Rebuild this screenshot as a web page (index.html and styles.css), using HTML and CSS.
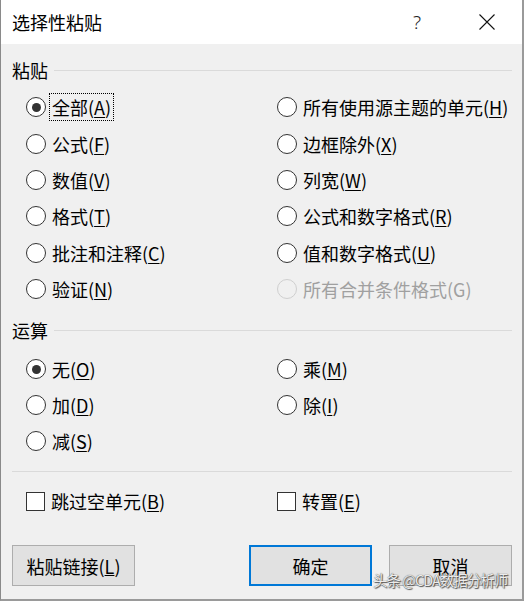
FILE: index.html
```html
<!DOCTYPE html>
<html lang="zh-CN">
<head>
<meta charset="utf-8">
<link rel="stylesheet" href="styles.css">
<title>选择性粘贴</title>
</head>
<body>
<div class="window">
  <div class="titlebar">
    <span class="title">选择性粘贴</span>
    <span class="cap help">?</span>
    <span class="cap close"><svg width="16" height="16" viewBox="0 0 16 16"><path d="M0.5 0.5 L15.5 15.5 M15.5 0.5 L0.5 15.5" stroke="#111" stroke-width="1.1" fill="none"/></svg></span>
  </div>
  <div class="content">
    <div class="group-head"><span>粘贴</span><i class="rule"></i></div>
    <div class="grid paste">
      <label class="opt"><span class="radio on"></span><span class="txt focus">全部(<u>A</u>)</span></label>
      <label class="opt"><span class="radio"></span><span class="txt">所有使用源主题的单元(<u>H</u>)</span></label>
      <label class="opt"><span class="radio"></span><span class="txt">公式(<u>F</u>)</span></label>
      <label class="opt"><span class="radio"></span><span class="txt">边框除外(<u>X</u>)</span></label>
      <label class="opt"><span class="radio"></span><span class="txt">数值(<u>V</u>)</span></label>
      <label class="opt"><span class="radio"></span><span class="txt">列宽(<u>W</u>)</span></label>
      <label class="opt"><span class="radio"></span><span class="txt">格式(<u>T</u>)</span></label>
      <label class="opt"><span class="radio"></span><span class="txt">公式和数字格式(<u>R</u>)</span></label>
      <label class="opt"><span class="radio"></span><span class="txt">批注和注释(<u>C</u>)</span></label>
      <label class="opt"><span class="radio"></span><span class="txt">值和数字格式(<u>U</u>)</span></label>
      <label class="opt"><span class="radio"></span><span class="txt">验证(<u>N</u>)</span></label>
      <label class="opt disabled"><span class="radio"></span><span class="txt">所有合并条件格式(G)</span></label>
    </div>
    <div class="group-head ops-head"><span>运算</span><i class="rule"></i></div>
    <div class="grid ops">
      <label class="opt"><span class="radio on"></span><span class="txt">无(<u>O</u>)</span></label>
      <label class="opt"><span class="radio"></span><span class="txt">乘(<u>M</u>)</span></label>
      <label class="opt"><span class="radio"></span><span class="txt">加(<u>D</u>)</span></label>
      <label class="opt"><span class="radio"></span><span class="txt">除(<u>I</u>)</span></label>
      <label class="opt"><span class="radio"></span><span class="txt">减(<u>S</u>)</span></label>
    </div>
    <i class="rule sep"></i>
    <div class="grid checks">
      <label class="opt"><span class="check"></span><span class="txt">跳过空单元(<u>B</u>)</span></label>
      <label class="opt"><span class="check"></span><span class="txt">转置(<u>E</u>)</span></label>
    </div>
    <div class="buttons">
      <button class="btn">粘贴链接(<u>L</u>)</button>
      <span class="spacer"></span>
      <button class="btn default">确定</button>
      <button class="btn">取消</button>
    </div>
  </div>
  <div class="watermark">头条 @CDA数据分析师</div>
</div>
</body>
</html>
```
FILE: styles.css
```css
html, body {
  margin: 0;
  padding: 0;
  background: #f0f0f0;
}
body {
  font-family: "Noto Sans CJK SC", "Microsoft YaHei", sans-serif;
  font-size: 18px;
  color: #000;
}
.window {
  position: relative;
  width: 524px;
  height: 601px;
  box-sizing: border-box;
  border-left: 1px solid #8a8a8a;
  border-right: 2px solid #9a9a9a;
  border-bottom: 2px solid #9a9a9a;
  background: #f0f0f0;
  overflow: hidden;
}
.titlebar {
  height: 44px;
  background: #fff;
  display: flex;
  align-items: center;
  padding-left: 11px;
}
.title {
  flex: 1;
  line-height: 24px;
}
.cap {
  width: 30px;
  display: flex;
  justify-content: center;
  align-items: center;
}
.help {
  font-family: "Noto Sans", sans-serif;
  font-weight: 300;
  font-size: 19px;
  color: #222;
  margin-right: 40px;
}
.close {
  margin-right: 20px;
}
.content {
  padding: 14px 10px 0 11px;
}
.group-head {
  display: flex;
  align-items: center;
  height: 24px;
  line-height: 24px;
}
.rule {
  display: block;
  flex: 1;
  height: 1px;
  background: #dadada;
  margin-left: 6px;
}
.grid {
  display: grid;
  grid-template-columns: 251px 1fr;
  padding-left: 14px;
}
.paste {
  margin-top: 7px;
  grid-auto-rows: 36.4px;
}
.ops-head {
  margin-top: 11px;
}
.ops {
  margin-top: 9px;
  grid-auto-rows: 36px;
}
.sep {
  flex: none;
  margin: 12px 0 0 0;
}
.checks {
  margin-top: 11px;
  grid-auto-rows: 36px;
}
.opt {
  display: flex;
  align-items: center;
  white-space: nowrap;
}
.txt {
  line-height: 24px;
  padding: 0;
  margin-left: 5px;
  border: 1px dotted transparent;
}
.txt.focus {
  border-color: #000;
  padding: 1px 2px;
  margin-left: 3px;
}
.txt u {
  text-decoration-thickness: 1px;
  text-underline-offset: 2px;
}
.radio {
  width: 18px;
  height: 18px;
  border: 1px solid #333;
  border-radius: 50%;
  background: #fff;
  display: flex;
  align-items: center;
  justify-content: center;
  flex: none;
}
.radio.on::after {
  content: "";
  width: 9px;
  height: 9px;
  border-radius: 50%;
  background: #333;
}
.disabled .radio {
  border-color: #cfcfcf;
  background: #f0f0f0;
}
.disabled .txt {
  color: #a0a0a0;
}
.check {
  width: 17px;
  height: 17px;
  border: 1px solid #333;
  background: #fff;
  flex: none;
}
.buttons {
  display: flex;
  margin-top: 26px;
  gap: 17px;
}
.spacer {
  flex: 1;
}
.btn {
  width: 123px;
  height: 41px;
  box-sizing: border-box;
  background: #e1e1e1;
  border: 1px solid #adadad;
  font-family: "Noto Sans CJK SC", sans-serif;
  font-size: 18px;
  color: #000;
  padding: 0;
}
.btn.default {
  border: 2px solid #0078d7;
}
.watermark {
  position: absolute;
  left: 372px;
  top: 570px;
  font-size: 14.5px;
  letter-spacing: -1px;
  line-height: 20px;
  color: #ececec;
  text-shadow: 0 0 1px #333, 1px 1px 1px #555;
  white-space: nowrap;
}
```
